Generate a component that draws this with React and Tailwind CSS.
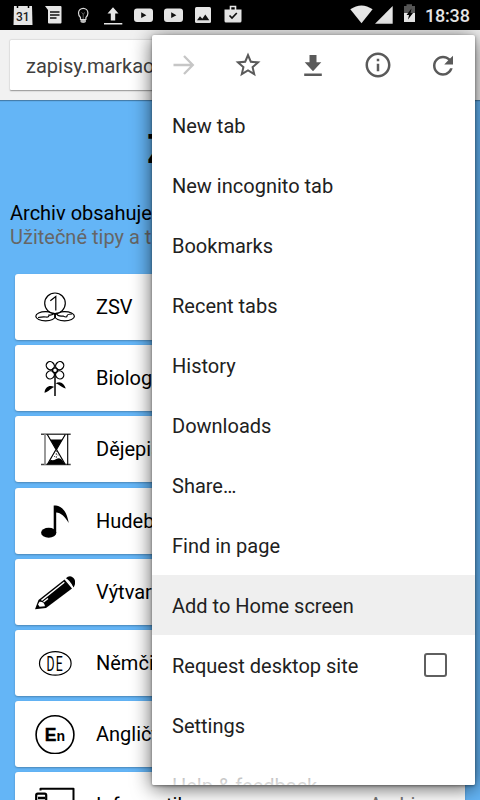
import React from 'react';

const ROBOTO = "font-['Roboto','Noto_Sans',sans-serif]";

function Coin() {
  return (
    <svg className="h-10 w-10" viewBox="0 0 40 40" fill="none" stroke="#000" strokeWidth="1.2">
      <ellipse cx="10.600" cy="29.300" rx="9.800" ry="4.600" />
      <ellipse cx="29.600" cy="29.300" rx="9.800" ry="4.600" />
      <circle cx="20" cy="16.300" r="10.300" fill="#fff" />
      <path d="M15.300 13.800 20.800 9.500V23.600" strokeWidth="1.200" />
      <path d="M3 30.500q5-1 8-.5t3-2q4 .5 5-2M37 27q-5 0-5 2t-4 0q-5 1-7-3M20 26v5" />
    </svg>
  );
}

function Flower() {
  return (
    <svg className="h-10 w-10" viewBox="0 0 40 40" fill="none" stroke="#000" strokeWidth="1.3">
      <ellipse cx="15.300" cy="7.700" rx="3.900" ry="4.200" transform="rotate(-45 15.300 7.700)" />
      <ellipse cx="24.700" cy="7.700" rx="3.900" ry="4.200" transform="rotate(45 24.700 7.700)" />
      <ellipse cx="15.300" cy="16.900" rx="3.900" ry="4.200" transform="rotate(45 15.300 16.900)" />
      <ellipse cx="24.700" cy="16.900" rx="3.900" ry="4.200" transform="rotate(-45 24.700 16.900)" />
      <circle cx="20" cy="12.300" r="2.400" fill="#fff" />
      <path d="M20 15v23" strokeWidth="1.500" />
      <path d="M9.500 34.800C10 28.500 15 26.500 19.200 29 16 30 14 33.500 9.500 34.800ZM30.800 30.500C29 25 25 22.500 20.500 25.500 24 26 26 29.500 30.800 30.500Z" fill="#000" stroke="none" />
    </svg>
  );
}

function Hourglass() {
  return (
    <svg className="h-10 w-10" viewBox="0 0 40 40" fill="none" stroke="#000">
      <path d="M6 5.300H35.700M6 35.600H35.700" stroke="#444" strokeWidth="1.500" />
      <path d="M10 5v31" stroke="#888" strokeWidth="1.700" />
      <path d="M32.700 5v31" strokeWidth="1.100" />
      <path d="M12.300 5.500 21 20.500 12.300 35.500M30.300 5.500 21.500 20.500 30.300 35.500" strokeWidth="1.200" />
      <path d="M15.300 10.600H27.300L21.300 21ZM12.300 35.500 15.600 30.800Q18 32 21.300 30T26.800 30.800L30.300 35.500Z" fill="#000" stroke="none" />
      <path d="M21.300 21V30M19 27.500h1M22.500 26h1" stroke="#555" strokeWidth="1" strokeDasharray="2 1" />
    </svg>
  );
}

function Note() {
  return (
    <svg className="h-10 w-10" viewBox="0 0 40 40">
      <ellipse cx="13.700" cy="31.800" rx="7.600" ry="5" />
      <path d="M18.700 4.500H21C27.500 5.500 32 11 33.700 22 29.500 15 26 12 21.200 11.500V32H18.700Z" />
    </svg>
  );
}

function PencilIcon() {
  return (
    <svg className="h-10 w-10" viewBox="0 0 40 40">
      <path d="M0 37.300 3.500 28 29.500 7.500 37 16.500 11 36Z" />
      <path d="M30.500 6.500Q35 2.500 38.500 6T38.500 15.500Z" />
      <path d="M29.300 6.200Q34.500 8.500 38 16" fill="none" stroke="#fff" strokeWidth="1.300" />
      <path d="M4.500 29.800Q9 29.300 10 34.200L4.600 34.700 3 32.500Z" fill="#fff" />
      <path d="M6.500 28.400 29.300 10.300M8.500 30 13 26.500" fill="none" stroke="#fff" strokeWidth="1.400" />
    </svg>
  );
}

function German() {
  return (
    <svg className="h-10 w-10" viewBox="0 0 40 40">
      <ellipse cx="20.300" cy="20.400" rx="15.800" ry="11.800" fill="none" stroke="#000" strokeWidth="1.200" />
      <g transform="translate(11.500 27.700) scale(.6 1)">
        <text x="0" y="0" fontSize="20.500" letterSpacing="2" className="font-['Roboto',sans-serif] font-normal">DE</text>
      </g>
    </svg>
  );
}

function English() {
  return (
    <svg className="h-10 w-10" viewBox="0 0 40 40">
      <circle cx="20" cy="20.700" r="18.900" fill="none" stroke="#000" strokeWidth="1.600" />
      <text x="9.800" y="27.300" fontSize="17.500" stroke="#000" strokeWidth=".4" className="font-['Liberation_Sans',sans-serif] font-bold">E</text>
      <text x="21.600" y="27.300" fontSize="14" className="font-['Liberation_Sans',sans-serif] font-bold">n</text>
    </svg>
  );
}

function Computer() {
  return (
    <svg className="h-10 w-10" viewBox="0 0 40 40" fill="none" stroke="#000">
      <path d="M5.500 5.500V3.700H38.500V30H14" strokeWidth="2" strokeLinejoin="round" />
      <rect x="1.200" y="8.700" width="10" height="28" rx="1.500" strokeWidth="2.200" />
      <path d="M3 13H10" strokeWidth="2.500" />
    </svg>
  );
}

const subjects = [
  ['ZSV', Coin],
  ['Biologie', Flower],
  ['Dějepis', Hourglass],
  ['Hudebka', Note],
  ['Výtvarka', PencilIcon],
  ['Němčina', German],
  ['Angličtina', English],
  ['Informatika', Computer, 'Archiv'],
];

const menuItems = ['New tab', 'New incognito tab', 'Bookmarks', 'Recent tabs', 'History', 'Downloads', 'Share…', 'Find in page', 'Add to Home screen', 'Request desktop site', 'Settings', 'Help & feedback'];

function StatusBar() {
  return (
    <div className="flex h-[30px] items-center bg-black text-[#e6e6e6]">
      <svg className="h-[30px] w-[250px]" viewBox="0 0 250 30" fill="#e6e6e6">
        <path d="M14 6h18l.500 19h-19Z" />
        <path d="M17.500 5v3M28.500 5v3" stroke="#000" strokeWidth="1.500" />
        <text x="22.800" y="20.800" fontSize="12" textAnchor="middle" fill="#222" className="font-['Roboto',sans-serif] font-medium">31</text>
        <path d="M45 6h15.500q1 0 1 1v15.500q0 1-1 1h-11.500q-1 0-1-1V10Z" />
        <path d="M50 12h9.500M50 15h9.500M50 18h6.500" stroke="#111" strokeWidth="1.400" />
        <path d="M80.500 17.500q-2-1.500-2-4.500a4.700 4.700 0 0 1 9.400 0q0 3-2 4.500v2h-5.400Z" fill="none" stroke="#d8d8d8" strokeWidth="1.200" />
        <path d="M80.500 20h5.400v2q-2.700 2-5.400 0Z" fill="#bbb" />
        <path d="M81.500 12.500 83.200 14 85 12.500M83.200 14V19" fill="none" stroke="#777" strokeWidth=".8" />
        <path d="M113 7.300 118.500 13.500H115.200V20.500H110.800V13.500H107.500ZM104 23h18.300v1.600H104Z" />
        <rect x="134" y="8.500" width="19" height="13.500" rx="3" />
        <path d="M141.200 12.300v5.700l5.200-2.850Z" fill="#111" />
        <rect x="164" y="8.500" width="19" height="13.500" rx="3" />
        <path d="M171.200 12.300v5.700l5.200-2.850Z" fill="#111" />
        <rect x="195" y="7" width="16" height="16" rx="1.500" />
        <path d="M197 20.300l3-4 2.300 2.500 3-4.300 4 5.800Z" fill="#111" />
        <path d="M224.500 9.500h17v11.500q0 1.500-1.500 1.500h-14q-1.500 0-1.500-1.500Z" />
        <path d="M230.500 10V6.500h5V10" fill="none" stroke="#e6e6e6" strokeWidth="1.600" />
        <path d="m229.500 15.500 2.500 2.500 4.800-5" fill="none" stroke="#111" strokeWidth="1.700" />
      </svg>
      <svg className="ml-[98px] h-[30px] w-[70px]" viewBox="348 0 70 30" fill="#e6e6e6">
        <path d="M350.300 9.300Q361.500 1.500 372.600 9.300L361.500 23.300Z" />
        <path d="M375 23.700 392.700 6V23.700Z" />
        <path d="M404 6h2.500V4.300h5.500V6h3v16h-11Z" fill="#555" />
        <path d="M404 13h11v9h-11Z" />
        <path d="M411.500 8.500 406.500 15h2.500l-1 4.500 5-6.500h-2.500Z" fill="#000" />
      </svg>
      <span className="ml-[7px] pt-[2px] text-[18px] leading-[28px] font-medium tracking-[-0.2px]">18:38</span>
    </div>
  );
}

function MenuIcons() {
  return (
    <div className="flex h-[60px] items-center gap-[34.8px] pl-[16.400px]">
      <svg className="h-[30px] w-[30px] shrink-0" viewBox="0 0 30 30" fill="none" stroke="#c6c6c6" strokeWidth="2.300">
        <path d="M5.500 15H24M16 6 24.800 15 16 24" />
      </svg>
      <svg className="h-[30px] w-[30px] shrink-0" viewBox="0 0 24 24" fill="#5a5a5a">
        <path d="m22 9.240-7.190-.62L12 2 9.190 8.630 2 9.240l5.460 4.730L5.820 21 12 17.270 18.180 21l-1.630-7.030L22 9.240zM12 15.400l-3.760 2.270 1-4.280-3.320-2.880 4.380-.38L12 6.100l1.710 4.040 4.380.38-3.320 2.880 1 4.280L12 15.400z" />
      </svg>
      <svg className="h-[30px] w-[30px] shrink-0" viewBox="0 0 30 30" fill="#5a5a5a">
        <path d="M11.500 5h7v7.200h4.800L15 21.300 6.700 12.200H11.500ZM6.200 23.600h17.600v2.300H6.200Z" />
      </svg>
      <svg className="h-[30px] w-[30px] shrink-0" viewBox="0 0 24 24" fill="#5a5a5a">
        <path d="M11 7h2v2h-2zm0 4h2v6h-2zm1-9C6.480 2 2 6.480 2 12s4.480 10 10 10 10-4.480 10-10S17.520 2 12 2zm0 18c-4.410 0-8-3.590-8-8s3.590-8 8-8 8 3.590 8 8-3.590 8-8 8z" />
      </svg>
      <svg className="h-[30px] w-[30px] shrink-0" viewBox="0 -0.500 24 24" fill="#5a5a5a">
        <path d="M17.650 6.350C16.200 4.900 14.210 4 12 4c-4.420 0-7.990 3.580-7.990 8s3.570 8 7.990 8c3.730 0 6.840-2.550 7.730-6h-2.080c-.82 2.330-3.040 4-5.650 4-3.310 0-6-2.690-6-6s2.690-6 6-6c1.660 0 3.140.69 4.220 1.780L13 11h7V4l-2.350 2.350z" />
      </svg>
    </div>
  );
}

export default function App() {
  return (
    <div className={`relative h-[800px] w-[480px] overflow-hidden bg-[#64b5f6] text-black ${ROBOTO}`}>
      <StatusBar />
      <div className="h-[70px] bg-[#f1f1f1] pt-[10px] pl-[10px] shadow-[0_1px_1px_rgba(0,0,0,0.3)]">
        <div className="h-[50px] w-[460px] rounded-[1px] bg-white pl-4 text-[20px] leading-[53px] text-[#404040] shadow-[0_0.5px_1.500px_rgba(0,0,0,0.4)]">
          zapisy.markao
        </div>
      </div>
      <div className="flex h-[800px] flex-col">
        <h1 className="mt-[26px] h-[48px] pl-[147px] text-[40px] leading-[48px] font-bold">Z</h1>
        <p className="mt-[27px] px-[10px] text-[20px] leading-6">Archiv obsahuje</p>
        <p className="px-[10px] text-[20px] leading-6 text-[#666]">Užitečné tipy a t</p>
        <div className="mt-[25px] flex flex-col gap-[5.2px] px-[15px]">
          {subjects.map(([name, Icon, extra]) => (
            <div key={name} className="flex h-[66px] shrink-0 items-center rounded-[3px] bg-white pl-5 text-[20px] shadow-[0_1px_2px_rgba(0,0,0,0.25)]">
              <Icon />
              <span className="ml-[21px]">{name}</span>
              {extra && <span className="mr-[40px] ml-auto text-[#777]">{extra}</span>}
            </div>
          ))}
        </div>
      </div>

      <div className="absolute top-[35px] left-[152px] h-[749.500px] w-[323px] overflow-hidden rounded-[2px] bg-white shadow-[0_3px_20px_rgba(0,0,0,0.65),0_1px_3px_rgba(0,0,0,0.4)]">
        <MenuIcons />
        {menuItems.map((label) => (
          <div
            key={label}
            className={`flex h-[60px] items-center justify-between pr-[28px] pl-5 pt-[2px] text-[20px] text-[#212121] ${label === 'Add to Home screen' ? 'bg-[#efefef]' : ''}`}
          >
            <span>{label}</span>
            {label === 'Request desktop site' && <span className="mb-[2px] h-[23.500px] w-[23.500px] rounded-[3px] border-[2.500px] border-[#5f5f5f]" />}
          </div>
        ))}
        <div className="absolute bottom-0 left-0 h-[38px] w-full bg-gradient-to-b from-white/20 to-white/85" />
      </div>
    </div>
  );
}
